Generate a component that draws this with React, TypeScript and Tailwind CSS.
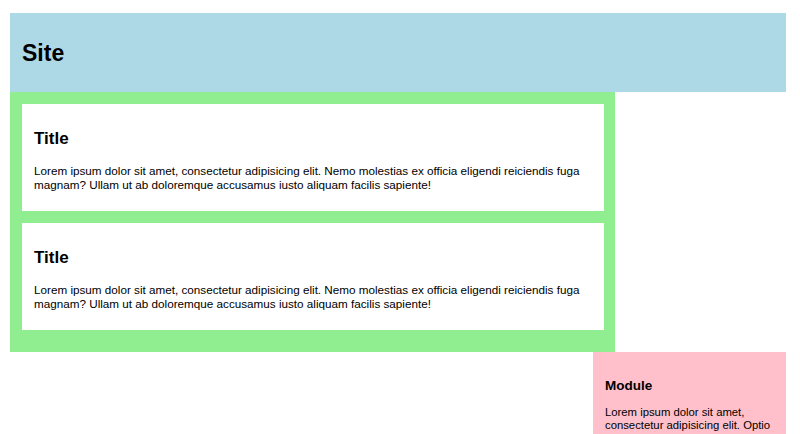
const lorem =
  'Lorem ipsum dolor sit amet, consectetur adipisicing elit. Nemo molestias ex officia eligendi reiciendis fuga magnam? Ullam ut ab doloremque accusamus iusto aliquam facilis sapiente!';

function Card() {
  return (
    <article className="bg-white px-3 pt-[25px] pb-[19px]">
      <h2 className="text-[17px] font-bold leading-[20px] mb-[15px]">Title</h2>
      <p className="text-[11.7px] leading-[14px]">{lorem}</p>
    </article>
  );
}

export default function App() {
  return (
    <div
      className="min-h-[434px] bg-white text-black pt-[13px] pl-[10px] overflow-hidden"
      style={{ fontFamily: '"Liberation Sans", Arial, sans-serif' }}
    >
      <div className="w-[776px] flex flex-col">
        <header className="h-[79px] bg-[#add8e6] flex items-center px-3">
          <h1 className="text-[23px] font-bold leading-[28px]">Site</h1>
        </header>

        <main className="w-[605px] bg-[#90ee90] pt-3 pb-[22px] pl-3 pr-[11px] flex flex-col gap-3">
          <Card />
          <Card />
        </main>

        <aside className="ml-auto w-[193px] bg-[#ffc0cb] px-3 pt-[25px] pb-6">
          <h3 className="text-[13.5px] font-bold leading-[17px] mb-3">Module</h3>
          <p className="text-[11.3px] leading-[13px]">
            Lorem ipsum dolor sit amet, consectetur adipisicing elit. Optio quos dolorum molestias facilis
            aliquid nesciunt, placeat ipsum officiis!
          </p>
        </aside>
      </div>
    </div>
  );
}
